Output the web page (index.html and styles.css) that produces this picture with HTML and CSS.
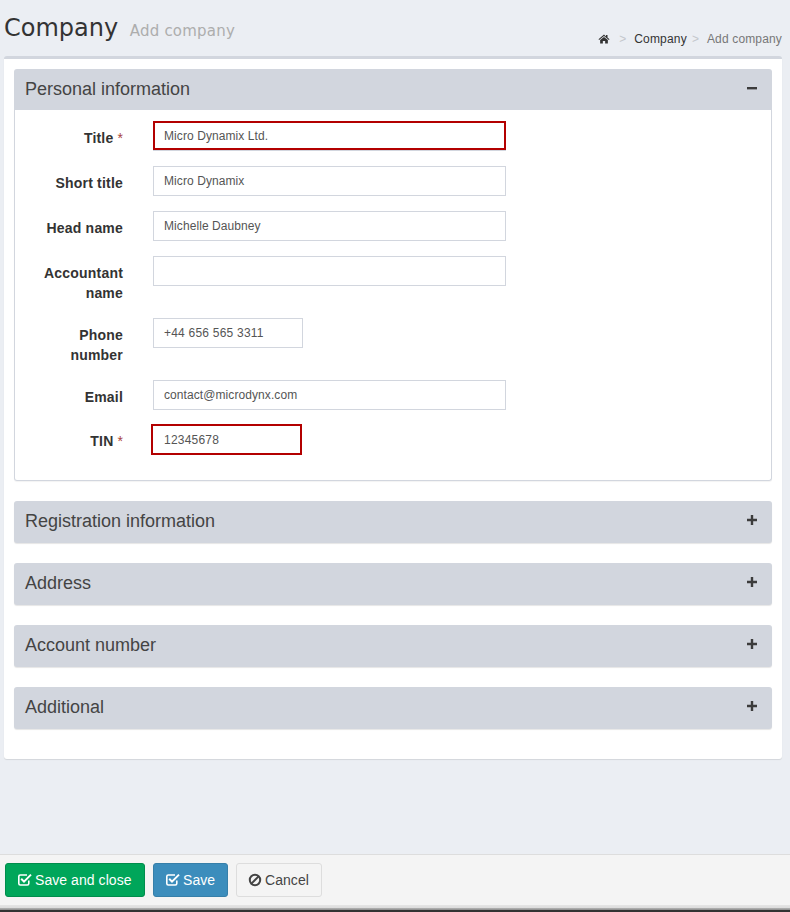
FILE: index.html
```html
<!DOCTYPE html>
<html lang="en">
<head>
<meta charset="utf-8">
<title>Company</title>
<link rel="stylesheet" href="styles.css">
</head>
<body>
<div class="page">
  <header class="page-head">
    <h1 class="page-title">Company <small class="page-sub">Add company</small></h1>
    <ol class="crumbs">
      <li class="crumb-home"><svg class="home-icon" viewBox="0 0 24 20" aria-hidden="true"><path d="M12 1.2 1 10.6l1.3 1.5L12 3.9l9.7 8.2 1.3-1.5-4-3.4V2.2h-3v2.7L12 1.2zM4.3 12.2V19h5.4v-5h4.6v5h5.4v-6.8L12 6z"/></svg></li>
      <li class="crumb-sep">&gt;</li>
      <li class="crumb-link">Company</li>
      <li class="crumb-sep crumb-sep-tight">&gt;</li>
      <li class="crumb-current">Add company</li>
    </ol>
  </header>

  <main class="card">
    <section class="panel panel-open">
      <div class="panel-head">
        <h2 class="panel-title">Personal information</h2>
        <svg class="toggle" viewBox="0 0 10 10" aria-hidden="true"><rect x="0" y="4" width="10" height="2.4"/></svg>
      </div>
      <form class="panel-body">
        <div class="row row-first">
          <label class="label">Title <span class="req">*</span></label>
          <input class="input input-wide input-error input-title" type="text" value="Micro Dynamix Ltd.">
        </div>
        <div class="row">
          <label class="label">Short title</label>
          <input class="input input-wide" type="text" value="Micro Dynamix">
        </div>
        <div class="row">
          <label class="label">Head name</label>
          <input class="input input-wide" type="text" value="Michelle Daubney">
        </div>
        <div class="row">
          <label class="label">Accountant name</label>
          <input class="input input-wide" type="text" value="">
        </div>
        <div class="row">
          <label class="label">Phone number</label>
          <input class="input input-phone input-digits" type="text" value="+44 656 565 3311">
        </div>
        <div class="row">
          <label class="label">Email</label>
          <input class="input input-wide" type="text" value="contact@microdynx.com">
        </div>
        <div class="row row-tin">
          <label class="label">TIN <span class="req">*</span></label>
          <input class="input input-tin input-error input-digits" type="text" value="12345678">
        </div>
      </form>
    </section>

    <section class="panel">
      <div class="panel-head panel-closed">
        <h2 class="panel-title">Registration information</h2>
        <svg class="toggle" viewBox="0 0 10 10" aria-hidden="true"><path d="M3.8 0h2.4v3.8H10v2.4H6.2V10H3.8V6.2H0V3.8h3.8z"/></svg>
      </div>
    </section>
    <section class="panel">
      <div class="panel-head panel-closed">
        <h2 class="panel-title">Address</h2>
        <svg class="toggle" viewBox="0 0 10 10" aria-hidden="true"><path d="M3.8 0h2.4v3.8H10v2.4H6.2V10H3.8V6.2H0V3.8h3.8z"/></svg>
      </div>
    </section>
    <section class="panel">
      <div class="panel-head panel-closed">
        <h2 class="panel-title">Account number</h2>
        <svg class="toggle" viewBox="0 0 10 10" aria-hidden="true"><path d="M3.8 0h2.4v3.8H10v2.4H6.2V10H3.8V6.2H0V3.8h3.8z"/></svg>
      </div>
    </section>
    <section class="panel">
      <div class="panel-head panel-closed">
        <h2 class="panel-title">Additional</h2>
        <svg class="toggle" viewBox="0 0 10 10" aria-hidden="true"><path d="M3.8 0h2.4v3.8H10v2.4H6.2V10H3.8V6.2H0V3.8h3.8z"/></svg>
      </div>
    </section>
  </main>

  <footer class="actions">
    <button class="btn btn-green" type="button"><svg class="btn-icon" viewBox="0 0 14 14" aria-hidden="true"><path class="ico-box" d="M10.800 7.500V10.500A1.500 1.500 0 0 1 9.300 12H2.300A1.500 1.500 0 0 1 .8 10.500V3.500A1.500 1.500 0 0 1 2.300 2H9"/><path class="ico-stroke ico-thick" d="m3.200 5.800 2.800 2.800 7-7"/></svg><span class="btn-text">Save and close</span></button>
    <button class="btn btn-blue" type="button"><svg class="btn-icon" viewBox="0 0 14 14" aria-hidden="true"><path class="ico-box" d="M10.800 7.500V10.500A1.500 1.500 0 0 1 9.300 12H2.300A1.500 1.500 0 0 1 .8 10.500V3.500A1.500 1.500 0 0 1 2.300 2H9"/><path class="ico-stroke ico-thick" d="m3.200 5.800 2.800 2.800 7-7"/></svg><span class="btn-text">Save</span></button>
    <button class="btn btn-plain" type="button"><svg class="btn-icon" viewBox="0 0 14 14" aria-hidden="true"><circle class="ico-stroke ico-thick" cx="7" cy="7" r="5.200"/><path class="ico-stroke ico-thick" d="m3.400 10.600 7.200-7.200"/></svg><span class="btn-text">Cancel</span></button>
  </footer>
  <div class="bottom-edge"></div>
</div>
</body>
</html>
```
FILE: styles.css
```css
* { box-sizing: border-box; }
html, body { margin: 0; padding: 0; }
body {
  background: #ebeef3;
  color: #333;
  font-family: "Liberation Sans", Arial, sans-serif;
  font-size: 14px;
}
.page {
  height: 912px;
  display: flex;
  flex-direction: column;
  overflow: hidden;
}
.page-head {
  height: 56px;
  display: flex;
  justify-content: space-between;
  align-items: flex-start;
  padding: 0 8px 0 4px;
}
.page-title {
  margin: 13px 0 0;
  font-family: "DejaVu Sans", sans-serif;
  font-size: 24px;
  font-weight: 400;
  line-height: 30px;
  color: #333;
}
.page-sub {
  margin-left: 4px;
  font-size: 15px;
  letter-spacing: .2px;
  color: #adadad;
}
.crumbs {
  list-style: none;
  margin: 31px 0 0;
  padding: 0;
  display: flex;
  align-items: center;
  height: 16px;
  font-size: 12px;
  line-height: 16px;
}
.home-icon { display: block; width: 12px; height: 10px; fill: #333; }
.crumb-home { margin-right: 9px; }
.crumb-sep { color: #c4c7cc; margin-right: 8px; }
.crumb-sep-tight { margin-left: 5px; }
.crumb-link { color: #333; letter-spacing: .2px; }
.crumb-current { color: #777; letter-spacing: .15px; }

.card {
  margin: 0 8px 0 4px;
  height: 703px;
  padding: 10px 10px 0;
  background: #fff;
  border-top: 3px solid #d2d6de;
  border-radius: 3px;
  box-shadow: 0 1px 1px rgba(0, 0, 0, .1);
}
.panel { margin-bottom: 20px; }
.panel-head {
  height: 41px;
  display: flex;
  justify-content: space-between;
  align-items: center;
  padding: 0 15px 2px 11px;
  background: #d2d6de;
  border-radius: 3px 3px 0 0;
}
.panel-closed {
  height: 42px;
  padding-bottom: 3px;
  border-radius: 3px;
  box-shadow: 0 1px 1px rgba(0, 0, 0, .1);
}
.panel-title {
  margin: 0;
  font-size: 18px;
  font-weight: 400;
  line-height: 20px;
  color: #444;
}
.toggle { width: 10px; height: 10px; fill: #3c3c3c; display: block; margin-bottom: 1px; }
.panel-body {
  height: 371px;
  padding: 11px 0 0;
  border: 1px solid #d2d6de;
  border-top: 0;
  border-radius: 0 0 3px 3px;
  box-shadow: 0 1px 1px rgba(0, 0, 0, .05);
}
.row {
  display: flex;
  align-items: flex-start;
  margin-bottom: 15px;
}
.row-tin { margin-top: -1px; }
.label {
  width: 92px;
  margin-left: 16px;
  margin-right: 30px;
  padding-top: 7px;
  flex: none;
  text-align: right;
  font-weight: 700;
  line-height: 20px;
  letter-spacing: .2px;
  color: #333;
}
.req { color: #a94442; font-weight: 400; letter-spacing: 0; }
.input {
  display: block;
  height: 30px;
  padding: 0 10px;
  border: 1px solid #d2d6de;
  background: #fff;
  color: #555;
  font-family: "Liberation Sans", Arial, sans-serif;
  font-size: 12px;
  letter-spacing: .08px;
  outline: 0;
}
.input-wide { width: 353px; }
.input-phone { width: 150px; }
.input-tin { width: 151px; margin-left: -2px; padding-left: 11px; height: 31px; }
.input-digits { letter-spacing: .22px; }
.input-error { border: 2px solid #b30000; }
.input-title { height: 29px; padding-left: 9px; box-shadow: 0 1px 0 #d2d6de; margin-bottom: 1px; }

.actions {
  margin-top: 95px;
  height: 51px;
  display: flex;
  align-items: flex-start;
  gap: 8px;
  padding: 8px 5px 0;
  background: #f4f4f4;
  border-top: 1px solid #ddd;
  flex: none;
}
.btn {
  height: 34px;
  display: inline-flex;
  align-items: center;
  padding: 0 12px;
  border: 1px solid transparent;
  border-radius: 3px;
  font-family: "Liberation Sans", Arial, sans-serif;
  font-size: 14px;
  line-height: 20px;
}
.btn-text { letter-spacing: .06px; }
.btn-green { width: 140px; background: #00a65a; border-color: #008d4c; color: #fff; }
.btn-blue { width: 75px; background: #3c8dbc; border-color: #367fa9; color: #fff; }
.btn-plain { width: 86px; padding-left: 11px; background: #f4f4f4; border-color: #ddd; color: #444; }
.btn-icon { width: 14px; height: 14px; margin-right: 3px; flex: none; }
.ico-box { fill: none; stroke: currentColor; stroke-width: 1.6; }
.ico-stroke { fill: none; stroke: currentColor; stroke-width: 1.4; }
.ico-thick { stroke-width: 2; }
.bottom-edge {
  flex: none;
  height: 7px;
  background: linear-gradient(#e4e4e4 0, #dcdcdc 3px, #b5b5b5 3px, #8a8a8a 5px, #333 5px);
}
```
